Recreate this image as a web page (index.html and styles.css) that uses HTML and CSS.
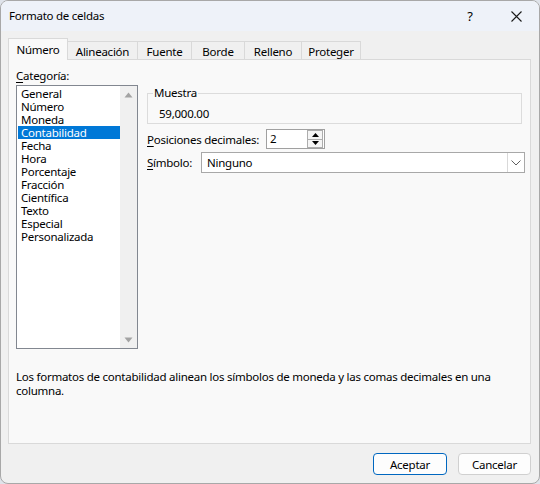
FILE: index.html
```html
<!DOCTYPE html>
<html lang="es">
<head>
<meta charset="utf-8">
<title>Formato de celdas</title>
<link rel="stylesheet" href="styles.css">
</head>
<body>
<div class="window">
  <div class="titlebar">
    <span class="title">Formato de celdas</span>
    <div class="title-actions">
      <span class="help">?</span>
      <span class="close"><svg width="11" height="11" viewBox="0 0 11 11"><path d="M0.5 0.5 L10.5 10.5 M10.5 0.5 L0.5 10.5" stroke="#1a1a1a" stroke-width="1.1" fill="none"/></svg></span>
    </div>
  </div>
  <div class="body">
    <div class="tabs">
      <div class="tab tab-numero active">Número</div>
      <div class="tab tab-alineacion">Alineación</div>
      <div class="tab tab-fuente">Fuente</div>
      <div class="tab tab-borde">Borde</div>
      <div class="tab tab-relleno">Relleno</div>
      <div class="tab tab-proteger">Proteger</div>
    </div>
    <div class="panel">
      <div class="panel-main">
        <div class="cat-col">
          <div class="label"><u>C</u>ategoría:</div>
          <div class="listbox">
            <ul class="items">
              <li>General</li>
              <li>Número</li>
              <li>Moneda</li>
              <li class="selected">Contabilidad</li>
              <li>Fecha</li>
              <li>Hora</li>
              <li>Porcentaje</li>
              <li>Fracción</li>
              <li>Científica</li>
              <li>Texto</li>
              <li>Especial</li>
              <li>Personalizada</li>
            </ul>
            <div class="scrollbar">
              <svg width="9" height="6" viewBox="0 0 9 6"><path d="M4.5 0.5 L8.5 5.5 L0.5 5.5 Z" fill="#a3a3a3"/></svg>
              <svg width="9" height="6" viewBox="0 0 9 6"><path d="M0.5 0.5 L8.5 0.5 L4.5 5.5 Z" fill="#a3a3a3"/></svg>
            </div>
          </div>
        </div>
        <div class="opts">
          <fieldset class="sample">
            <legend>Muestra</legend>
            <div class="sample-value">59,000.00</div>
          </fieldset>
          <div class="row row-dec">
            <span class="row-label label-dec"><u>P</u>osiciones decimales:</span>
            <div class="spin">
              <span class="spin-value">2</span>
              <div class="spin-btns">
                <span class="spin-btn"><svg width="7" height="4" viewBox="0 0 7 4"><path d="M3.5 0 L7 4 L0 4 Z" fill="#000"/></svg></span>
                <span class="spin-btn"><svg width="7" height="4" viewBox="0 0 7 4"><path d="M0 0 L7 0 L3.5 4 Z" fill="#000"/></svg></span>
              </div>
            </div>
          </div>
          <div class="row row-sym">
            <span class="row-label label-sym"><u>S</u>ímbolo:</span>
            <div class="combo">
              <span class="combo-value">Ninguno</span>
              <span class="combo-arrow"><svg width="10" height="6" viewBox="0 0 10 6"><path d="M0.5 0.5 L5 5 L9.5 0.5" stroke="#606060" stroke-width="1" fill="none"/></svg></span>
            </div>
          </div>
        </div>
      </div>
      <p class="desc">Los formatos de contabilidad alinean los símbolos de moneda y las comas decimales en una columna.</p>
    </div>
    <div class="buttons">
      <button class="btn btn-primary">Aceptar</button>
      <button class="btn">Cancelar</button>
    </div>
  </div>
</div>
</body>
</html>
```
FILE: styles.css
```css
* { box-sizing: border-box; }
html, body { margin: 0; padding: 0; }
body {
  width: 540px;
  height: 484px;
  background: #dfe3ea;
  font-family: "Noto Sans", "Open Sans", sans-serif;
  font-size: 11.5px;
  letter-spacing: -0.25px;
  color: #000;
  overflow: hidden;
}
.window {
  width: 540px;
  height: 484px;
  border: 1px solid #a8a8a8;
  border-radius: 8px;
  overflow: hidden;
  display: flex;
  flex-direction: column;
  background: #f0f0f0;
}
.titlebar {
  height: 30px;
  flex: none;
  background: #eef2f9;
  display: flex;
  align-items: center;
  padding-left: 8px;
}
.title { line-height: 14px; }
.title-actions {
  margin-left: auto;
  display: flex;
  align-items: center;
}
.help {
  width: 46px;
  text-align: center;
  font-size: 13px;
}
.close {
  width: 46px;
  display: flex;
  justify-content: center;
}
.body {
  flex: 1;
  display: flex;
  flex-direction: column;
  padding: 7px 8px 0 7px;
}
.tabs {
  display: flex;
  align-items: flex-end;
  height: 21px;
  position: relative;
  z-index: 1;
}
.tab {
  height: 18px;
  border: 1px solid #d9d9d9;
  border-bottom: none;
  margin-left: -1px;
  background: #f0f0f0;
  text-align: center;
  line-height: 17px;
  padding-top: 1px;
}
.tab.active {
  height: 22px;
  margin-bottom: -1px;
  margin-left: 0;
  background: #f9f9f9;
  line-height: 19px;
}
.tab-numero { width: 60px; }
.tab-alineacion { width: 71px; }
.tab-fuente { width: 55px; }
.tab-borde { width: 54px; }
.tab-relleno { width: 58px; }
.tab-proteger { width: 60px; }
.panel {
  height: 385px;
  flex: none;
  border: 1px solid #d9d9d9;
  background: #f9f9f9;
  padding: 9px 7px 0 7px;
  display: flex;
  flex-direction: column;
}
.panel-main { display: flex; }
.label { line-height: 14px; }
u { text-decoration-thickness: 1px; text-underline-offset: 2px; }
.listbox {
  margin-top: 2px;
  width: 122px;
  height: 264px;
  border: 1px solid #828790;
  background: #fff;
  display: flex;
}
.items {
  list-style: none;
  margin: 1px 0 0 1px;
  padding: 0;
  width: 102px;
}
.items li {
  height: 13px;
  line-height: 13px;
  padding-left: 3px;
  white-space: nowrap;
}
.items li.selected { background: #0078d7; color: #fff; }
.scrollbar {
  margin-left: auto;
  width: 17px;
  background: #f0f0f0;
  display: flex;
  flex-direction: column;
  justify-content: space-between;
  align-items: center;
  padding: 6px 0 5px;
}
.scrollbar svg { display: block; }
.opts {
  margin-left: 9px;
  padding-top: 17px;
  display: flex;
  flex-direction: column;
}
.sample {
  width: 375px;
  margin: 0;
  padding: 7px 0 2px 11px;
  border: 1px solid #dcdcdc;
  min-inline-size: 0;
}
.sample legend {
  padding: 0 1px;
  margin-left: -6px;
  line-height: 14px;
}
.sample-value { line-height: 14px; }
.row { display: flex; align-items: center; }
.row-label { white-space: nowrap; }
.row-dec { margin-top: 5px; }
.row-sym { margin-top: 3px; }
.label-dec { width: 119px; }
.label-sym { width: 54px; }
.spin {
  width: 59px;
  height: 20px;
  border: 1px solid #a0a0a0;
  background: #fff;
  display: flex;
  align-items: center;
  padding-left: 3px;
}
.spin-value { line-height: 14px; }
.spin-btns {
  margin-left: auto;
  margin-right: 1px;
  width: 16px;
  height: 18px;
  border: 1px solid #adadad;
  display: flex;
  flex-direction: column;
}
.spin-btn {
  flex: 1;
  display: flex;
  align-items: center;
  justify-content: center;
  background: #f5f5f5;
}
.spin-btn + .spin-btn { border-top: 1px solid #adadad; }
.spin-btn svg { display: block; }
.combo {
  width: 324px;
  height: 21px;
  border: 1px solid #a8a8a8;
  background: #fff;
  display: flex;
  align-items: center;
  padding-left: 5px;
}
.combo-arrow {
  margin-left: auto;
  width: 17px;
  height: 19px;
  border-left: 1px solid #d9d9d9;
  display: flex;
  align-items: center;
  justify-content: center;
}
.combo-arrow svg { display: block; }
.desc {
  margin: 21px 0 0 0;
  line-height: 14px;
  max-width: 490px;
}
.buttons {
  display: flex;
  justify-content: flex-end;
  gap: 11px;
  margin-top: 9px;
}
.btn {
  width: 73px;
  height: 22px;
  font-family: inherit;
  font-size: 11.5px;
  letter-spacing: inherit;
  color: #000;
  background: #fdfdfd;
  border: 1px solid #d0d0d0;
  border-radius: 4px;
  padding: 0;
}
.btn-primary { border-color: #0067c0; width: 74px; }
```
